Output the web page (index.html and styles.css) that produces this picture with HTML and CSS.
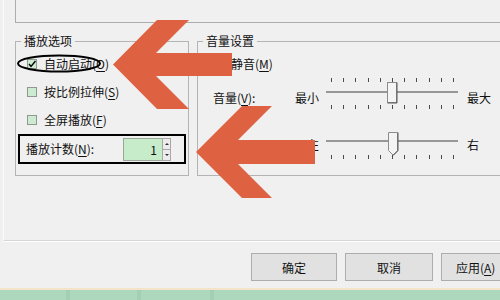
FILE: index.html
```html
<!DOCTYPE html>
<html lang="zh-CN">
<head>
  <meta charset="UTF-8">
  <meta name="viewport" content="width=device-width, initial-scale=1.0">
  <title>播放选项</title>
  <link rel="stylesheet" href="styles.css">
</head>
<body>

  <div class="page">
    <div class="top-box"></div>

    <div class="groups">
      <div class="group group-play">
        <div class="group-title">播放选项</div>
        <div class="opts">
          <div class="check-row">
            <span class="box"><svg width="10" height="10" viewBox="0 0 10 10"><path d="M2 5 L4 7.5 L8.5 2" fill="none" stroke="#000" stroke-width="1.4"/></svg></span>
            <span>自动启动(<u>O</u>)</span>
          </div>
          <div class="check-row">
            <span class="box"></span>
            <span>按比例拉伸(<u>S</u>)</span>
          </div>
          <div class="check-row">
            <span class="box"></span>
            <span>全屏播放(<u>F</u>)</span>
          </div>
          <div class="count-row">
            <span>播放计数(<u>N</u>):</span>
            <div class="spin">
              <div class="spin-field">1</div>
              <div class="spin-btns">
                <span class="spin-up"></span>
                <span class="spin-down"></span>
              </div>
            </div>
          </div>
        </div>
      </div>

      <div class="group group-vol">
        <div class="group-title">音量设置</div>
        <div class="opts">
          <div class="check-row mute">
            <span class="box"></span>
            <span>静音(<u>M</u>)</span>
          </div>

          <div class="slider-row vol">
            <span class="txt row-label">音量(<u>V</u>):</span>
            <span class="txt side-label">最小</span>
            <div class="slider">
              <div class="ticks"><i></i><i></i><i></i><i></i><i></i><i></i><i></i><i></i><i></i><i></i><i></i></div>
              <div class="track"></div>
              <div class="ticks ticks-low"><i></i><i></i><i></i><i></i><i></i><i></i><i></i><i></i><i></i><i></i><i></i></div>
              <svg class="thumb" width="11" height="22" viewBox="0 0 11 22"><rect x="0.5" y="0.5" width="9" height="20" fill="#f4f4f4" stroke="#8c8c8c"/><path d="M10 0.5 V21 H0.5" fill="none" stroke="#5a5a5a"/></svg>
            </div>
            <span class="txt end-label">最大</span>
          </div>

          <div class="slider-row bal">
            <span class="txt row-label">平衡(<u>B</u>):</span>
            <span class="txt side-label">左</span>
            <div class="slider">
              <div class="track"></div>
              <div class="ticks ticks-low"><i></i><i></i><i></i><i></i><i></i><i></i><i></i><i></i><i></i><i></i><i></i></div>
              <svg class="thumb" width="11" height="24" viewBox="0 0 11 24"><path d="M0.5 0.5 H9.5 V18.5 L5 23 L0.5 18.5 Z" fill="#f4f4f4" stroke="#8c8c8c"/><path d="M10 0.5 V18.7 L5.2 23.5" fill="none" stroke="#5a5a5a"/></svg>
            </div>
            <span class="txt end-label">右</span>
          </div>
        </div>
      </div>
    </div>
  </div>

  <div class="footer">
    <button class="btn">确定</button>
    <button class="btn btn-wide">取消</button>
    <button class="btn btn-wide btn-apply">应用(<u>A</u>)</button>
  </div>
  <div class="edge"></div>
  <div class="sheet"></div>

  <svg class="marks" width="500" height="300" viewBox="0 0 500 300">
    <ellipse cx="59" cy="63.5" rx="41" ry="8" fill="none" stroke="#000" stroke-width="2"/>
    <polygon points="113,64.5 157,20 189,20 156,53 232,53 232,76 156,76 189,109 157,109" fill="#de6242"/>
    <polygon points="196,152 242,106 272,106 238,140 315,140 315,164 238,164 272,198 242,198" fill="#de6242"/>
  </svg>

</body>
</html>
```

FILE: styles.css
```css
body {
  margin: 0;
  width: 500px;
  height: 300px;
  overflow: hidden;
  position: relative;
  background: #f0f0f0;
  font-family: "Noto Sans CJK SC", "Microsoft YaHei", sans-serif;
  font-size: 12px;
  color: #111;
}
u {
  text-decoration-thickness: 1px;
  text-underline-offset: 2px;
}
.page {
  margin-left: 3px;
  height: 241px;
  overflow: hidden;
  border-left: 1px solid #fbfbfb;
  border-bottom: 1px solid #d6d6d6;
  box-sizing: border-box;
  box-shadow: 0 1px 0 #ffffff;
}
.top-box {
  margin-left: 11px;
  width: 520px;
  height: 23px;
  border-left: 1px solid #adadad;
  border-bottom: 1px solid #adadad;
  box-sizing: border-box;
}
.groups {
  display: flex;
  gap: 8px;
  margin-top: 18px;
  margin-left: 11px;
}
.group {
  flex: 0 0 auto;
  height: 135px;
  border: 1px solid #b4b4b4;
  box-sizing: border-box;
}
.group-play {
  width: 174px;
}
.group-vol {
  width: 320px;
}
.group-title {
  width: fit-content;
  margin: -8px 0 0 5px;
  padding: 0 3px;
  height: 14px;
  line-height: 14px;
  background: #f0f0f0;
}
.opts {
  padding-top: 2px;
}
.check-row {
  display: flex;
  align-items: center;
  gap: 7px;
  height: 28px;
  padding-left: 11px;
  line-height: 14px;
}
.box {
  width: 10px;
  height: 10px;
  box-sizing: border-box;
  border: 1px solid #8d9a8d;
  background: #cdebd0;
  display: flex;
}
.box svg {
  margin: -1px;
}
.mute {
  padding-left: 14px;
  gap: 9px;
}
.count-row {
  display: flex;
  align-items: center;
  margin-left: 2px;
  width: 168px;
  height: 30px;
  box-sizing: border-box;
  border: 2px solid #000;
  padding-left: 6px;
  line-height: 14px;
}
.spin {
  display: flex;
  margin-left: auto;
  margin-right: 13px;
  height: 23px;
}
.spin-field {
  width: 39px;
  box-sizing: border-box;
  background: #c6ecca;
  border: 1px solid #9aa89a;
  border-right: none;
  text-align: right;
  padding-right: 5px;
  line-height: 21px;
}
.spin-btns {
  width: 9px;
  display: flex;
  flex-direction: column;
}
.spin-btns span {
  flex: 1;
  border: 1px solid #a8a8a8;
  background: #ececec;
  display: flex;
  align-items: center;
  justify-content: center;
}
.spin-btns span + span {
  border-top: none;
}
.spin-up::after {
  content: "";
  border: 2px solid transparent;
  border-bottom: 2px solid #333;
  border-top: none;
}
.spin-down::after {
  content: "";
  border: 2px solid transparent;
  border-top: 2px solid #333;
  border-bottom: none;
}
.slider-row {
  display: flex;
  align-items: flex-start;
  line-height: 14px;
}
.vol {
  height: 34px;
}
.vol .txt {
  margin-top: 13px;
}
.bal .txt {
  margin-top: 26px;
}
.row-label {
  margin-left: 15px;
  width: 80px;
}
.side-label {
  width: 26px;
  text-align: right;
}
.end-label {
  margin-left: 9px;
}
.slider {
  position: relative;
  margin-left: 7px;
  width: 132px;
  height: 32px;
}
.ticks {
  display: flex;
  justify-content: space-between;
  padding: 0 4px 0 5px;
  height: 4px;
}
.ticks i {
  width: 1px;
  height: 4px;
  background: #4a4a4a;
}
.track {
  height: 2px;
  background: #979797;
  margin-top: 9px;
}
.ticks-low {
  margin-top: 12px;
}
.vol .thumb {
  position: absolute;
  left: 61px;
  top: 4px;
}
.bal .track {
  margin-top: 28px;
}
.bal .ticks-low {
  margin-top: 13px;
}
.bal .thumb {
  position: absolute;
  left: 62px;
  top: 20px;
}
.footer {
  display: flex;
  gap: 8px;
  height: 47px;
  overflow: hidden;
  box-sizing: border-box;
  padding: 12px 0 0 251px;
}
.btn {
  flex: 0 0 auto;
  width: 86px;
  height: 28px;
  border: 1px solid #adadad;
  background: #e1e1e1;
  font-family: inherit;
  font-size: 12px;
  color: #111;
  padding: 0;
}
.btn-wide {
  width: 88px;
}
.btn-apply {
  text-align: left;
  padding-left: 14px;
}
.edge {
  height: 2px;
  background: #f2e3c9;
}
.sheet {
  height: 10px;
  background: linear-gradient(90deg, #aed8be 0 66px, #a3cfb4 66px 70px, #aed8be 70px 137px, #a3cfb4 137px 141px, #aed8be 141px 210px, #a3cfb4 210px 214px, #aed8be 214px);
}
.marks {
  position: absolute;
  left: 0;
  top: 0;
  pointer-events: none;
}
```
